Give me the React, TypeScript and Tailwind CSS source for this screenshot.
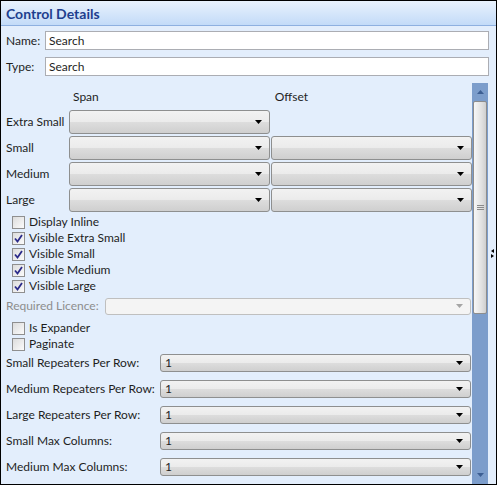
import React from "react";

// ==============================================================================================================
// && Small building blocks
function Arrow({ color = "#000" }: { color?: string }) {
  return (
    <svg width="7" height="4" viewBox="0 0 7 4" className="shrink-0">
      <path d="M0 0H7L3.5 4Z" fill={color} />
    </svg>
  );
}

function Combo({
  className,
  value,
  tall,
}: {
  className: string;
  value?: string;
  tall?: boolean;
}) {
  return (
    <div
      className={`${className} ${
        tall ? "h-[24px]" : "h-[18px]"
      } flex shrink-0 items-center justify-between rounded-[3px] border border-[#8e8f8f] bg-[linear-gradient(#f2f2f2_0%,#ebebeb_50%,#dddddd_50%,#cfcfcf_100%)] pl-[4px] pr-[7px]`}
    >
      <span className="leading-none">{value}</span>
      <Arrow />
    </div>
  );
}

function Check({ label, checked }: { label: string; checked?: boolean }) {
  return (
    <div className="flex h-[16px] shrink-0 items-center">
      <div className="ml-[11px] mr-[4px] flex h-[13px] w-[13px] items-center justify-center border border-[#8f8f8f] bg-[linear-gradient(135deg,#dcdcdc,#fbfbfb)]">
        {checked && (
          <svg width="9" height="9" viewBox="0 0 9 9">
            <path
              d="M1 4.5L3.5 7.5L8 1"
              stroke="#2b2b8a"
              strokeWidth="1.8"
              fill="none"
            />
          </svg>
        )}
      </div>
      <span className="whitespace-nowrap">{label}</span>
    </div>
  );
}

const sizes = ["Extra Small", "Small", "Medium", "Large"];
const repeaters = [
  "Small Repeaters Per Row:",
  "Medium Repeaters Per Row:",
  "Large Repeaters Per Row:",
  "Small Max Columns:",
  "Medium Max Columns:",
];

export default function App() {
  /*//^ ================================
                                   App => Control Details Panel
                                ================================ //*/
  return (
    <div
      className="flex h-[485px] w-[497px] flex-col overflow-hidden border border-black bg-[#e3eefc] text-[12px] text-[#1e1e1e]"
      style={{ fontFamily: 'Lato, "Open Sans", sans-serif' }}
    >
      {/* //^^ Header */}
      <div className="flex h-[25px] shrink-0 items-center border-b border-[#8eb0e0] bg-[linear-gradient(#e9f2fd,#c3dbf8)] pl-[5px]">
        <span className="text-[14px] font-bold text-[#1e3e8e]">Control Details</span>
      </div>

      {/* //^^ Name & Type */}
      <div className="flex h-[25px] shrink-0 items-center pt-[4px] pl-[5px]">
        <span className="w-[39px]">Name:</span>
        <div className="flex h-[19px] w-[444px] items-center border border-[#abadb3] bg-white pl-[3px]">
          Search
        </div>
      </div>
      <div className="flex h-[26px] shrink-0 items-center pt-[5px] pl-[5px]">
        <span className="w-[39px]">Type:</span>
        <div className="flex h-[19px] w-[444px] items-center border border-[#abadb3] bg-white pl-[3px]">
          Search
        </div>
      </div>

      {/* //^^ Scroll area */}
      <div className="mt-[6px] flex min-h-0 flex-1 overflow-hidden">
        <div className="flex w-[471px] shrink-0 flex-col [&>*]:shrink-0">
          {/* Span / Offset heading */}
          <div className="flex h-[27px] items-center">
            <span className="ml-[72px]">Span</span>
            <span className="ml-[176px]">Offset</span>
          </div>

          {/* Size rows */}
          <div className="flex flex-col gap-[2px]">
            {sizes.map((s, i) => (
              <div key={s} className="flex items-center">
                <span className="w-[68px] whitespace-nowrap pl-[5px]">{s}</span>
                <Combo className="w-[201px]" tall />
                {i > 0 && <Combo className="ml-[1px] w-[201px]" tall />}
              </div>
            ))}
          </div>

          {/* Checkboxes */}
          <div className="mt-[2px] flex flex-col">
            <Check label="Display Inline" />
            <Check label="Visible Extra Small" checked />
            <Check label="Visible Small" checked />
            <Check label="Visible Medium" checked />
            <Check label="Visible Large" checked />
          </div>

          {/* Required Licence */}
          <div className="mt-[3px] flex items-center">
            <span className="w-[104px] whitespace-nowrap pl-[5px] text-[#8d8d8d]">Required Licence:</span>
            <div className="flex h-[17px] w-[366px] items-center justify-end rounded-[3px] border border-[#bfbfbf] bg-[#f4f4f4] pr-[7px]">
              <Arrow color="#a5a5a5" />
            </div>
          </div>

          <div className="mt-[5px] flex flex-col">
            <Check label="Is Expander" />
            <Check label="Paginate" />
          </div>

          {/* Repeaters */}
          <div className="mt-[2px] flex flex-col gap-[8px]">
            {repeaters.map((r) => (
              <div key={r} className="flex items-center">
                <span className="w-[159px] whitespace-nowrap pl-[5px]">{r}</span>
                <Combo className="w-[311px]" value="1" />
              </div>
            ))}
          </div>
        </div>

        {/* Scrollbar */}
        <div className="flex w-[16px] shrink-0 flex-col bg-[#7c9dcb]">
          <div className="flex h-[18px] items-center justify-center">
            <svg width="7" height="4" viewBox="0 0 7 4">
              <path d="M0 4H7L3.5 0Z" fill="#3d5f93" />
            </svg>
          </div>
          <div className="mx-[1px] flex h-[213px] items-center justify-center rounded-[2px] border border-[#8d8d8d] bg-[linear-gradient(90deg,#f7f7f7,#e2e2e2_60%,#cfcfcf)]">
            <svg width="7" height="6" viewBox="0 0 7 6">
              <path d="M0 0.5H7M0 2.5H7M0 4.5H7" stroke="#8a8a8a" strokeWidth="1" />
            </svg>
          </div>
          <div className="flex-1" />
          <div className="flex h-[18px] items-center justify-center">
            <Arrow color="#3d5f93" />
          </div>
        </div>

        {/* Splitter grip */}
        <div className="flex flex-1 items-center justify-center">
          <svg width="5" height="9" viewBox="0 0 5 9" className="-mt-[60px]">
            <path d="M4 0V4L1 2Z M1 5V9L4 7Z" fill="#000" />
          </svg>
        </div>
      </div>
    </div>
  );
}
